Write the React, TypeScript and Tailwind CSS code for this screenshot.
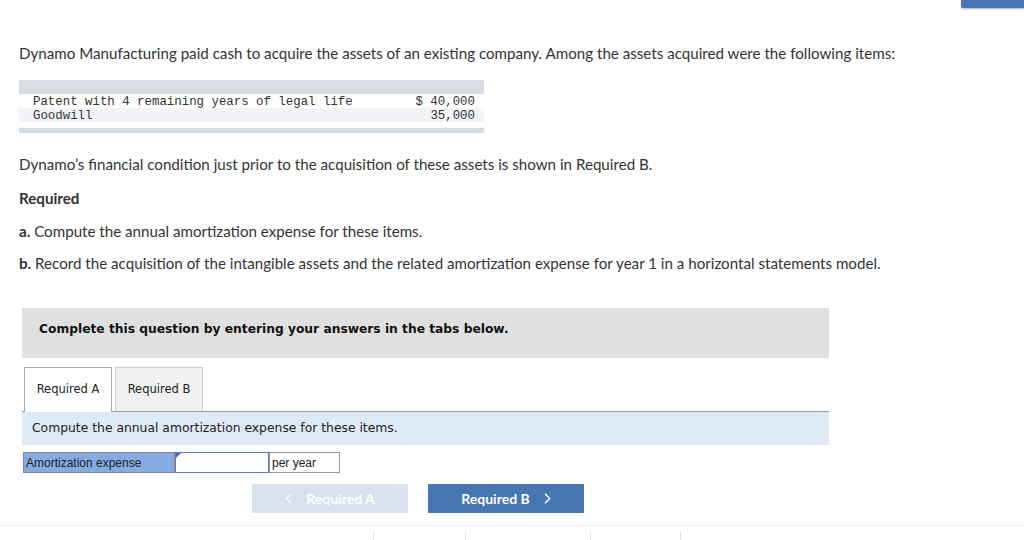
import React from "react";

const sans = { fontFamily: "Lato, 'Open Sans', sans-serif" };

function Chevron({ dir }: { dir: "left" | "right" }) {
  return (
    <svg width="7" height="11" viewBox="0 0 7 11" fill="none" stroke="currentColor" strokeWidth="1.4">
      {dir === "left" ? <path d="M6 0.8 L1.3 5.5 L6 10.2" /> : <path d="M1 0.8 L5.7 5.5 L1 10.2" />}
    </svg>
  );
}

export default function App() {
  return (
    <div className="relative w-[1024px] h-[540px] overflow-hidden bg-white text-[#333]" style={sans}>
      <div className="absolute right-0 top-0 w-[63px] h-[8px] bg-[#4a74b4] rounded-bl-[2px] shadow-[0_1px_2px_rgba(0,0,0,0.3)]" />
      <div className="pt-[44px] pl-[19px]">
        <p className="text-[15.15px] leading-[18px] text-[#333]">
          Dynamo Manufacturing paid cash to acquire the assets of an existing company. Among the assets acquired were the following items:
        </p>
        <div className="mt-[18px] w-[465px] font-['Liberation_Mono',monospace] text-[12.4px] text-[#333]">
          <div className="h-[14px] bg-[#d7dce5]" />
          <div className="flex h-[14px] items-center bg-white pl-[14px] pr-[9px] pt-[3px]">
            <span className="flex-1">Patent with 4 remaining years of legal life</span>
            <span>$ 40,000</span>
          </div>
          <div className="flex h-[14px] items-center bg-[#f3f4f7] pl-[14px] pr-[9px] pt-[3px]">
            <span className="flex-1">Goodwill</span>
            <span>35,000</span>
          </div>
          <div className="mt-[6px] h-[5px] bg-[#d7dce5]" />
        </div>
        <p className="mt-[22px] text-[15.15px] leading-[18px]">
          Dynamo’s financial condition just prior to the acquisition of these assets is shown in Required B.
        </p>
        <p className="mt-[16px] text-[15.15px] leading-[18px] font-bold">Required</p>
        <p className="mt-[15px] text-[15.15px] leading-[18px]">
          <b>a.</b> Compute the annual amortization expense for these items.
        </p>
        <p className="mt-[14px] text-[15.15px] leading-[18px]">
          <b>b.</b> Record the acquisition of the intangible assets and the related amortization expense for year 1 in a horizontal statements model.
        </p>
      </div>

      <div className="ml-[22px] mt-[36px] w-[807px]" style={{ fontFamily: "'DejaVu Sans', Verdana, sans-serif" }}>
        <div className="h-[50px] bg-[#e0e0e0] flex items-center pl-[17px] pb-[8px]">
          <span className="text-[12.25px] font-bold text-[#111]">Complete this question by entering your answers in the tabs below.</span>
        </div>
        <div className="mt-[8px] flex items-end pl-[2px] gap-[3px] h-[45px]">
          <div className="h-[45px] w-[88px] border border-b-0 border-[#aaa] bg-white flex items-center justify-center text-[11.5px] text-[#222] relative top-[1px]">
            Required A
          </div>
          <div className="h-[44px] w-[88px] border border-b-0 border-[#ccc] bg-[#f1f1f1] flex items-center justify-center text-[11.5px] text-[#222]">
            Required B
          </div>
        </div>
        <div className="h-px bg-[#999]" />
        <div className="h-[33px] bg-[#dfeaf7] flex items-center pl-[10px] text-[12.35px] text-[#222]">
          Compute the annual amortization expense for these items.
        </div>
        <div className="mt-[7px] ml-px flex h-[21px] text-[12px]" style={{ fontFamily: "'Liberation Sans', Arial, sans-serif" }}>
          <div className="w-[152px] bg-[#86abe0] border border-[#8a8a8a] flex items-center pl-[2px] text-[#222]">Amortization expense</div>
          <div className="relative w-[94px] border border-[#5b80b8] bg-white">
            <div className="absolute left-0 top-0 w-0 h-0 border-t-[5px] border-r-[5px] border-t-[#3f6fb5] border-r-transparent" />
          </div>
          <div className="w-[71px] border border-[#999] bg-white flex items-center pl-[2px] text-[#222]">per year</div>
        </div>
      </div>

      <div className="mt-[11px] ml-[252px] flex gap-[20px]" style={sans}>
        <div className="w-[156px] h-[29px] bg-[#d9e3f0] rounded-[1px] flex items-center justify-center text-white font-bold text-[14px]">
          <span className="mr-[14px] flex items-center"><Chevron dir="left" /></span>Required A
        </div>
        <div className="w-[156px] h-[29px] bg-[#4675b2] rounded-[1px] flex items-center justify-center text-white font-bold text-[14px]">
          Required B<span className="ml-[14px] flex items-center"><Chevron dir="right" /></span>
        </div>
      </div>

      <div className="mt-[12px] h-px bg-[#ececec]" />
      <div className="relative h-[14px]">
        <div className="absolute left-[373px] top-[5px] w-px h-[10px] bg-[#e5e5e5]" />
        <div className="absolute left-[465px] top-[5px] w-px h-[10px] bg-[#e5e5e5]" />
        <div className="absolute left-[590px] top-[5px] w-px h-[10px] bg-[#e5e5e5]" />
        <div className="absolute left-[680px] top-[5px] w-px h-[10px] bg-[#e5e5e5]" />
      </div>
    </div>
  );
}
